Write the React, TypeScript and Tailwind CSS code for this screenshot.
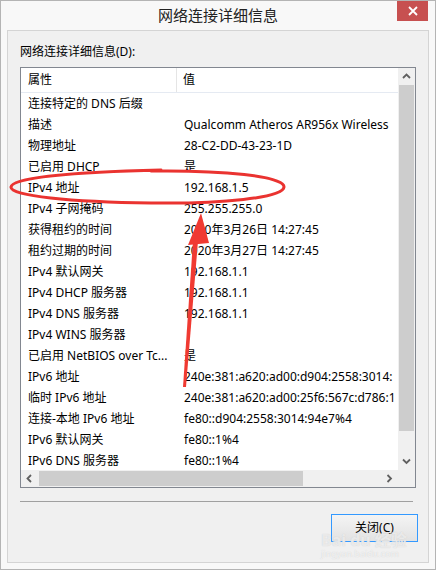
import React from "react";

const rows: [string, string][] = [
  ["连接特定的 DNS 后缀", ""],
  ["描述", "Qualcomm Atheros AR956x Wireless"],
  ["物理地址", "28-C2-DD-43-23-1D"],
  ["已启用 DHCP", "是"],
  ["IPv4 地址", "192.168.1.5"],
  ["IPv4 子网掩码", "255.255.255.0"],
  ["获得租约的时间", "2020年3月26日 14:27:45"],
  ["租约过期的时间", "2020年3月27日 14:27:45"],
  ["IPv4 默认网关", "192.168.1.1"],
  ["IPv4 DHCP 服务器", "192.168.1.1"],
  ["IPv4 DNS 服务器", "192.168.1.1"],
  ["IPv4 WINS 服务器", ""],
  ["已启用 NetBIOS over Tc...", "是"],
  ["IPv6 地址", "240e:381:a620:ad00:d904:2558:3014:"],
  ["临时 IPv6 地址", "240e:381:a620:ad00:25f6:567c:d786:1"],
  ["连接-本地 IPv6 地址", "fe80::d904:2558:3014:94e7%4"],
  ["IPv6 默认网关", "fe80::1%4"],
  ["IPv6 DNS 服务器", "fe80::1%4"],
];

const Chevron = ({ dir }: { dir: "up" | "down" | "left" | "right" }) => {
  const d =
    dir === "up"
      ? "M1 5 L4.5 1.5 L8 5"
      : dir === "down"
      ? "M1 1.5 L4.5 5 L8 1.5"
      : dir === "left"
      ? "M5 1 L1.5 4.5 L5 8"
      : "M1.5 1 L5 4.5 L1.5 8";
  const w = dir === "up" || dir === "down" ? 9 : 7;
  const h = dir === "up" || dir === "down" ? 7 : 9;
  return (
    <svg width={w} height={h} viewBox={`0 0 ${w} ${h}`}>
      <path d={d} fill="none" stroke="#606060" strokeWidth="1.8" />
    </svg>
  );
};

export default function App() {
  return (
    <div
      className="relative w-[436px] h-[570px] bg-[#f8f8f8] border border-[#b4b4b4] flex flex-col overflow-hidden text-black"
      style={{ fontFamily: "'Noto Sans','Noto Sans CJK SC',sans-serif" }}
    >
      {/* title bar */}
      <div className="h-[29px] flex items-center justify-center shrink-0">
        <span className="text-[15px] text-[#222]">网络连接详细信息</span>
      </div>
      <div className="absolute right-[7px] top-0 w-[31px] h-[20px] bg-[#c75050] flex items-center justify-center">
        <svg width="10" height="10" viewBox="0 0 10 10">
          <path d="M1 1 L9 9 M9 1 L1 9" stroke="#fff" strokeWidth="1.8" />
        </svg>
      </div>

      {/* inner panel */}
      <div className="flex-1 mx-[6px] mb-[6px] bg-[#f0f0f0] border border-[#d4d4d4] flex flex-col">
        <div className="pl-[12px] pt-[13px] h-[36px] text-[12px] leading-[16px]">网络连接详细信息(D):</div>

        {/* list box */}
        <div className="mx-[12px] h-[421px] border border-[#828790] bg-white flex">
          <div className="w-[377px] flex flex-col">
            <div className="flex-1 flex flex-col overflow-hidden">
              {/* header */}
              <div className="h-[25px] shrink-0 flex border-b border-[#e5eaf2] text-[12px]">
                <div className="w-[156px] pl-[7px] flex items-center border-r border-[#e5e5e5]">属性</div>
                <div className="pl-[6px] flex items-center">值</div>
              </div>
              {rows.map(([k, v], i) => (
                <div key={i} className="h-[21px] shrink-0 flex text-[12px] leading-[21px] whitespace-nowrap">
                  <div className="w-[156px] pl-[7px] overflow-hidden">{k}</div>
                  <div className="w-[221px] pl-[7px] overflow-hidden">{v}</div>
                </div>
              ))}
            </div>
            {/* horizontal scrollbar */}
            <div className="h-[17px] shrink-0 bg-[#f0f0f0] flex items-center">
              <div className="w-[17px] h-full flex items-center justify-center">
                <Chevron dir="left" />
              </div>
              <div className="flex-1 h-full flex items-center">
                <div className="w-[264px] h-[15px] ml-[1px] bg-[#cdcdcd]" />
              </div>
              <div className="w-[17px] h-full flex items-center justify-center">
                <Chevron dir="right" />
              </div>
            </div>
          </div>
          {/* vertical scrollbar */}
          <div className="flex-1 bg-[#f0f0f0] flex flex-col">
            <div className="h-[17px] flex items-center justify-center">
              <Chevron dir="up" />
            </div>
            <div className="h-[346px] mx-[1px] bg-[#cdcdcd]" />
            <div className="flex-1" />
            <div className="h-[17px] flex items-center justify-center">
              <Chevron dir="down" />
            </div>
            <div className="h-[17px]" />
          </div>
        </div>

        {/* separator */}
        <div className="mx-[12px] mr-[15px] mt-[13px] h-px bg-[#a0a0a0]" />

        {/* button row */}
        <div className="flex justify-end pr-[10px] pt-[12px]">
          <div className="w-[87px] h-[28px] border border-[#3399ff] bg-gradient-to-b from-[#f4f4f4] to-[#e2e2e2] flex items-center justify-center text-[12px]">
            关闭(<span className="underline">C</span>)
          </div>
        </div>
      </div>

      {/* watermark */}
      <div className="absolute left-[320px] top-[531px] flex flex-col items-start pointer-events-none">
        <span className="text-[16px] font-bold leading-[16px] text-white/60 [text-shadow:0_0_1px_#c8c8c8]">Bai du 经验</span>
        <span className="text-[9px] leading-[12px] text-white/70 [text-shadow:0_0_1px_#c8c8c8]">jingyan.baidu.com</span>
      </div>

      {/* red annotations */}
      <svg className="absolute left-0 top-0 pointer-events-none" width="436" height="570" viewBox="0 0 436 570">
        <path
          d="M150 170 C 220 169, 284 175, 283 186 C 282 197, 220 203, 150 202 C 70 201, 9 195, 10 186 C 11 177, 70 171, 160 169"
          fill="none"
          stroke="#ea3330"
          strokeWidth="3"
          strokeLinecap="round"
        />
        <polygon points="182,386 185,386 197,240 192,240" fill="#f03a32" />
        <polygon points="200,212 187,244 208,242" fill="#f03a32" />
      </svg>
    </div>
  );
}
